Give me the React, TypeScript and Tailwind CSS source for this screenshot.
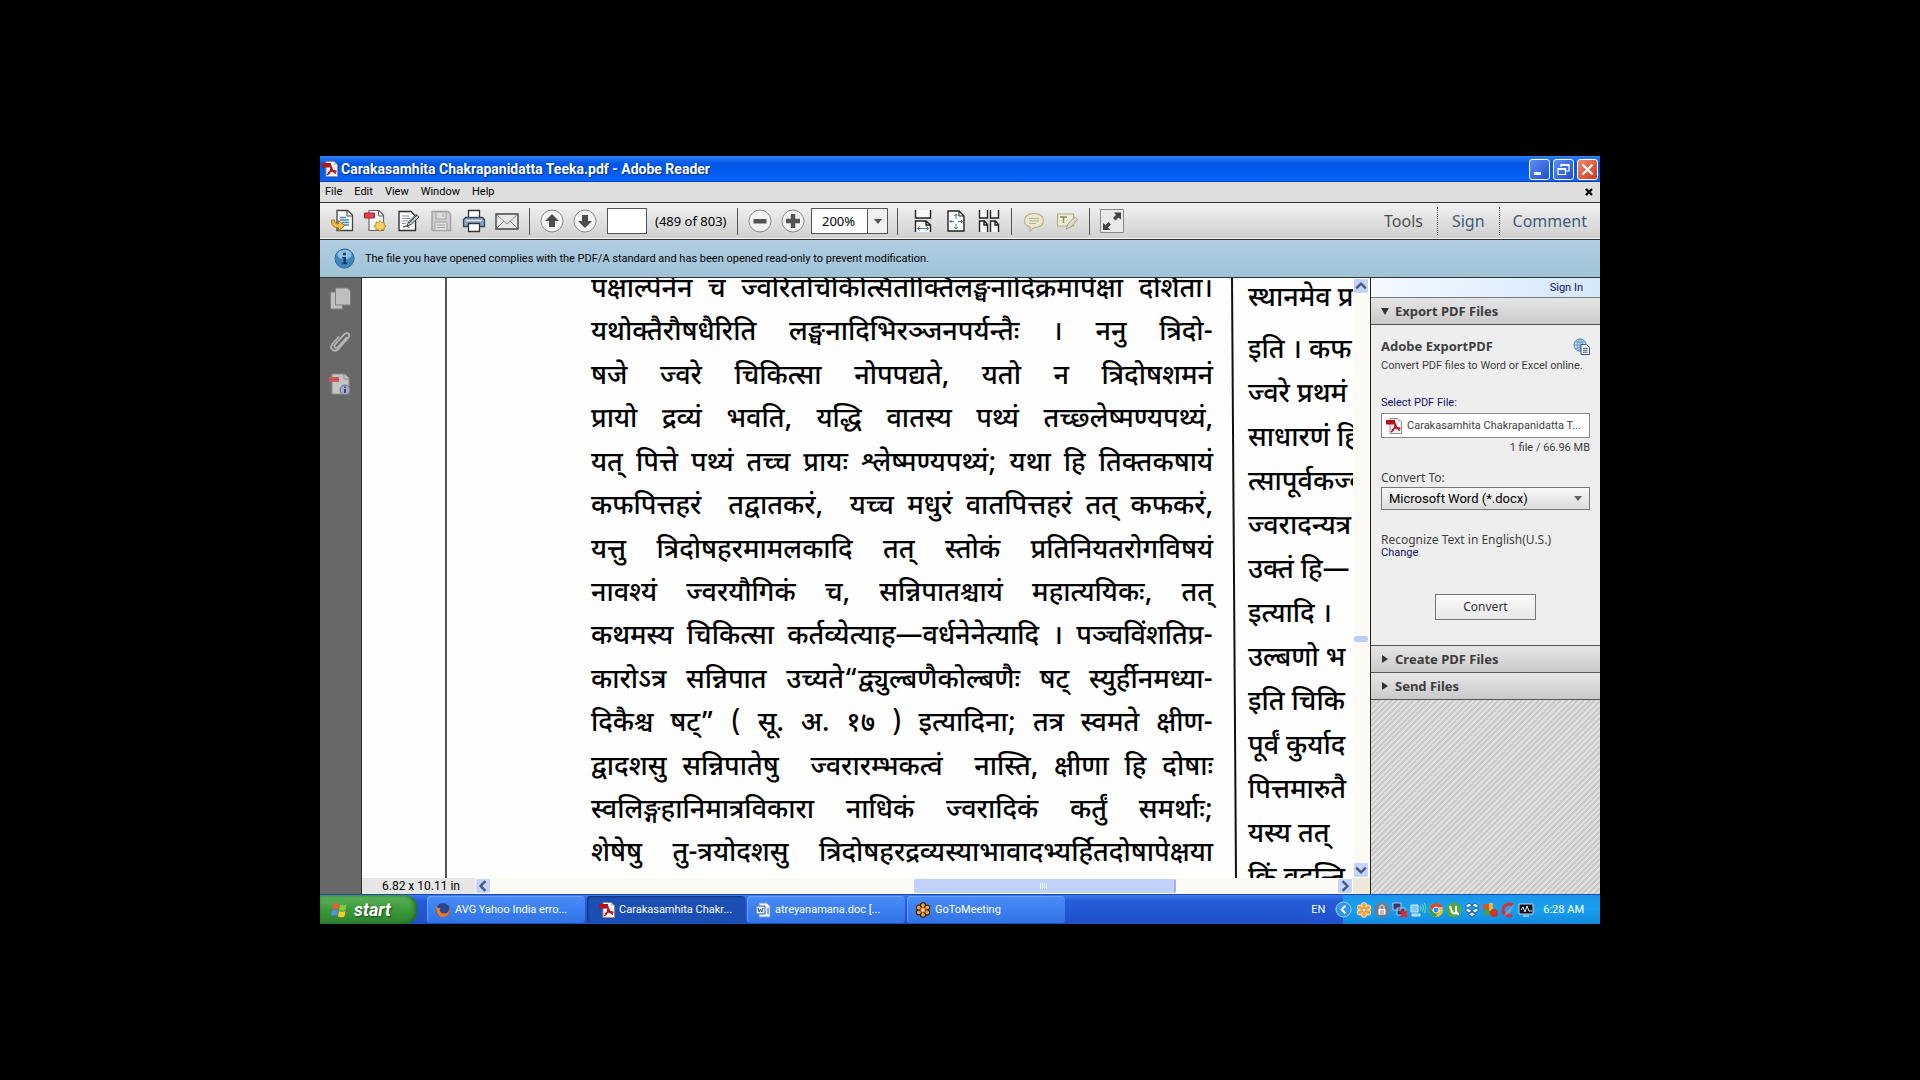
import type { ReactNode } from "react";

type TaskProps = {
  label: string;
  icon: ReactNode;
  active?: boolean;
};

const mainColumn = [
  "पक्षाल्पेनेन च ज्वरितचिकित्सितोक्तिलङ्घनादिक्रमापेक्षा दर्शिता।",
  "यथोक्तैरौषधैरिति लङ्घनादिभिरञ्जनपर्यन्तैः । ननु त्रिदो-",
  "षजे ज्वरे चिकित्सा नोपपद्यते, यतो न त्रिदोषशमनं",
  "प्रायो द्रव्यं भवति, यद्धि वातस्य पथ्यं तच्छ्लेष्मण्यपथ्यं,",
  "यत् पित्ते पथ्यं तच्च प्रायः श्लेष्मण्यपथ्यं; यथा हि तिक्तकषायं",
  "कफपित्तहरं\u00a0 तद्वातकरं,\u00a0 यच्च मधुरं वातपित्तहरं तत् कफकरं,",
  "यत्तु त्रिदोषहरमामलकादि तत् स्तोकं प्रतिनियतरोगविषयं",
  "नावश्यं ज्वरयौगिकं च, सन्निपातश्चायं महात्ययिकः, तत्",
  "कथमस्य चिकित्सा कर्तव्येत्याह—वर्धनेनेत्यादि । पञ्चविंशतिप्र-",
  "कारोऽत्र सन्निपात उच्यते“द्व्युल्बणैकोल्बणैः षट् स्युर्हीनमध्या-",
  "दिकैश्च षट्” ( सू. अ. १७ ) इत्यादिना; तत्र स्वमते क्षीण-",
  "द्वादशसु सन्निपातेषु\u00a0 ज्वरारम्भकत्वं\u00a0 नास्ति, क्षीणा हि दोषाः",
  "स्वलिङ्गहानिमात्रविकारा नाधिकं ज्वरादिकं कर्तुं समर्थाः;",
  "शेषेषु तु-त्रयोदशसु त्रिदोषहरद्रव्यस्याभावादभ्यर्हितदोषापेक्षया",
  "किंचिदेव दोषहरं भेषजं प्रयोज्यं श्रीमता वैद्येन",
];

const sideColumn = [
  "स्थानमेव प्र",
  "इति । कफ",
  "ज्वरे प्रथमं",
  "साधारणं हि",
  "त्सापूर्वकज्व",
  "ज्वरादन्यत्र",
  "उक्तं हि—",
  "इत्यादि ।",
  "उल्बणो भ",
  "इति चिकि",
  "पूर्वं कुर्याद",
  "पित्तमारुतै",
  "यस्य तत्",
  "किं वदन्ति",
];

function ToolIcon({ label, children }: { label: string; children: ReactNode }) {
  return (
    <button type="button" aria-label={label} className="flex h-8 w-[33px] shrink-0 items-center justify-center">
      <svg viewBox="0 0 24 24" className="size-6" fill="none">
        {children}
      </svg>
    </button>
  );
}

function Separator({ wide = false }: { wide?: boolean }) {
  return (
    <span className={wide ? "flex w-[18px] shrink-0 justify-center" : "flex w-3 shrink-0 justify-center"}>
      <span className="h-[27px] w-px bg-[#555]" />
    </span>
  );
}

function PdfGlyph() {
  return (
    <svg viewBox="0 0 16 16" className="size-4 shrink-0">
      <path d="M4 .5h8l3.500 3.500v11.500H4z" fill="#f7f3f3" stroke="#9a8b8b" />
      <path d="M12 .5V4h3.500z" fill="#ccc" />
      <path d="M0 2h9v4.500H0z" fill="#b3141c" />
      <path d="M5 14c3-2 4.500-6 4-9.500M6 12c3-2.500 6-2.500 8.500-1.500M9.500 6c.5 3 2.500 5.500 4.500 6.500" fill="none" stroke="#b3141c" strokeWidth="1.500" />
    </svg>
  );
}

function FlowerGlyph({ outline = false }: { outline?: boolean }) {
  const stroke = outline ? "#241505" : "#f6e2c0";
  return (
    <svg viewBox="0 0 18 18" className="size-4 shrink-0">
      {[0, 60, 120, 180, 240, 300].map((angle) => (
        <circle key={angle} cx="9" cy="3.600" r="2.800" fill="#f7a12b" stroke={stroke} strokeWidth="1.200" transform={`rotate(${angle} 9 9)`} />
      ))}
      <circle cx="9" cy="9" r="2.400" fill="#fff" stroke="#e07b10" strokeWidth="1.300" />
    </svg>
  );
}

function TaskButton({ label, icon, active = false }: TaskProps) {
  return (
    <button
      type="button"
      className={
        active
          ? "flex h-[27px] min-w-0 max-w-[158px] flex-1 items-center gap-1 rounded-sm bg-[#1c4fb4] px-3 text-white shadow-[inset_1px_1px_2px_#0d2f7c]"
          : "flex h-[27px] min-w-0 max-w-[158px] flex-1 items-center gap-1 rounded-sm bg-linear-to-b from-[#4a8bf5] via-[#3c7ff0] to-[#3373e4] px-2 text-white shadow-[inset_1px_1px_1px_#6ba4fb]"
      }
    >
      {icon}
      <span className="truncate">{label}</span>
    </button>
  );
}

function ScrollButton({ label, d }: { label: string; d: string }) {
  return (
    <button
      type="button"
      aria-label={label}
      className="flex size-4 shrink-0 items-center justify-center rounded-xs border border-white bg-[#c3d3fb]"
    >
      <svg viewBox="0 0 10 10" className="size-3" fill="none" stroke="#45597f" strokeWidth="2">
        <path d={d} />
      </svg>
    </button>
  );
}

function TitleBar() {
  return (
    <header className="flex h-[26px] items-center gap-[3px] bg-linear-to-b from-[#2b80f5] via-[#0055e5] via-30% to-[#0566fb] pr-[2px] pl-[2px] shadow-[inset_0_-1px_0_#0a3fb5]">
      <PdfGlyph />
      <h1 className="truncate text-[14px] leading-5 font-bold text-white [text-shadow:1px_1px_1px_#0a2a80]">
        Carakasamhita Chakrapanidatta Teeka.pdf - Adobe Reader
      </h1>
      <div className="ml-auto flex gap-[3px]">
        <button type="button" aria-label="Minimize" className="size-[21px] rounded-[3px] border border-white bg-linear-to-br from-[#5d8df0] to-[#1d4fd6]">
          <svg viewBox="0 0 19 19">
            <path d="M4 12h7v3H4z" fill="#fff" />
          </svg>
        </button>
        <button type="button" aria-label="Restore" className="size-[21px] rounded-[3px] border border-white bg-linear-to-br from-[#5d8df0] to-[#1d4fd6]">
          <svg viewBox="0 0 19 19" fill="none" stroke="#fff" strokeWidth="1.200">
            <path d="M7 7V4.500h8v6.500h-3M7 5.500h8" />
            <path d="M4 8.500h7.500v6H4zM4 9.500h7.500" />
          </svg>
        </button>
        <button type="button" aria-label="Close" className="size-[21px] rounded-[3px] border border-white bg-linear-to-br from-[#ee8a6a] to-[#cc3311]">
          <svg viewBox="0 0 19 19" stroke="#fff" strokeWidth="2.200">
            <path d="M4.500 4.500l10 10M14.500 4.500l-10 10" />
          </svg>
        </button>
      </div>
    </header>
  );
}

function MenuBar() {
  return (
    <nav className="flex h-5 items-center gap-3 bg-[#dedede] pr-[7px] pl-[5px] text-black">
      {["File", "Edit", "View", "Window", "Help"].map((name) => (
        <button key={name} type="button">
          {name}
        </button>
      ))}
      <button type="button" aria-label="Close document" className="ml-auto">
        <svg viewBox="0 0 8 8" className="size-2" stroke="#000" strokeWidth="2.400">
          <path d="M1 1l6 6M7 1L1 7" />
        </svg>
      </button>
    </nav>
  );
}

function Toolbar() {
  return (
    <div className="flex h-[38px] items-center border-y border-[#333] bg-linear-to-b from-[#f2f2f2] to-[#cfcfcf] pl-[5px] font-['Noto_Sans',sans-serif] shadow-[inset_0_-1px_0_#f5f5f5]">
      <ToolIcon label="Open">
        <path d="M7 1.500h10.500L22.500 6v15.500H7z" fill="#fafafa" stroke="#444" strokeWidth="1.300" />
        <path d="M17 2v5h5" stroke="#444" />
        <path d="M10 8.500h6M10 11h9M12 13.500h7M13 16h6" stroke="#4a84b8" strokeWidth="1.300" />
        <path d="M1.500 11c-.5 5 2.500 8 7 7.500v3.500l6-5.500-6-5v3.500c-2.500.3-4-1-4-4z" fill="#f5bf4a" stroke="#a67216" />
      </ToolIcon>
      <ToolIcon label="Create PDF">
        <path d="M6 1.500h10L20.500 6v15.500H6z" fill="#fafafa" stroke="#666" strokeWidth="1.200" />
        <path d="M15.500 2v5h5" stroke="#666" />
        <path d="M1.500 4h10v5h-10z" fill="#e0434d" stroke="#a8222c" />
        <path d="M17 11.500l1.500 2 2.500-.5v2.500l2 1.500-2 1.500v2.500l-2.500-.5-1.500 2-1.500-2-2.500.5v-2.500l-2-1.500 2-1.500V13l2.500.5z" fill="#f8cf63" stroke="#bd8b25" />
      </ToolIcon>
      <ToolIcon label="Sign document">
        <path d="M3 2.500h12L19.500 7v14.500H3z" fill="#fafafa" stroke="#333" strokeWidth="1.400" />
        <path d="M6 7h7M6 9.500h8M6 12h6M6 14.500h4" stroke="#999" />
        <path d="M7 18l3-1 3.500 1.500" stroke="#333" />
        <path d="M11 17l1.500-4L20 5.500l3 2.500-8 7.500z" fill="#bfc6cf" stroke="#444" />
        <path d="M13 14l8-8" stroke="#444" />
      </ToolIcon>
      <ToolIcon label="Save">
        <path d="M3 2.500h16l2.500 2.500v16.500H3z" fill="#d0d0d0" stroke="#a2a2a2" strokeWidth="1.500" />
        <path d="M7 3h10v7H7zM6 21v-8h12v8" fill="#dedede" stroke="#a2a2a2" />
        <path d="M14 4.500v3.500M8 16h8M8 18.500h8" stroke="#a2a2a2" />
      </ToolIcon>
      <ToolIcon label="Print">
        <path d="M6.500 1.500h11v8h-11z" fill="#fff" stroke="#333" strokeWidth="1.300" />
        <path d="M3.500 8.500h17l2 2v7h-21v-7z" fill="#8aa2bc" stroke="#39475a" strokeWidth="1.300" />
        <path d="M4 11.500h16" stroke="#d6e4f1" strokeWidth="1.500" />
        <path d="M6.500 14.500h11v8h-11z" fill="#fff" stroke="#333" strokeWidth="1.300" />
      </ToolIcon>
      <ToolIcon label="E-mail">
        <path d="M1 5h22v15H1z" fill="#e9e9e9" stroke="#444" strokeWidth="1.400" />
        <path d="M2 6l10 9L22 6M2 19l7-7M22 19l-7-7" stroke="#888" />
      </ToolIcon>
      <Separator />
      <ToolIcon label="Previous page">
        <circle cx="12" cy="12" r="11" fill="#f2f2f2" stroke="#888" />
        <path d="M12 5l7 7h-4v6H9v-6H5z" fill="#4d4d4d" />
      </ToolIcon>
      <ToolIcon label="Next page">
        <circle cx="12" cy="12" r="11" fill="#f2f2f2" stroke="#888" />
        <path d="M12 19l7-7h-4V6H9v6H5z" fill="#4d4d4d" />
      </ToolIcon>
      <input aria-label="Page number" className="mx-[6px] h-[26px] w-10 shrink-0 border border-[#555] bg-white px-1" />
      <span className="ml-[2px] w-[76px] shrink-0 text-[13px] whitespace-nowrap">(489 of 803)</span>
      <Separator />
      <ToolIcon label="Zoom out">
        <circle cx="12" cy="12" r="11" fill="#f2f2f2" stroke="#888" />
        <path d="M5.500 10h13v4.500h-13z" fill="#555" />
      </ToolIcon>
      <ToolIcon label="Zoom in">
        <circle cx="12" cy="12" r="11" fill="#f2f2f2" stroke="#888" />
        <path d="M9.800 5h4.500v4.800H19v4.500h-4.700V19H9.800v-4.700H5V9.800h4.800z" fill="#555" />
      </ToolIcon>
      <div className="ml-[2px] flex h-[26px] w-[77px] shrink-0 border border-[#555] bg-white">
        <input aria-label="Zoom level" defaultValue="200%" className="w-[55px] pl-[10px] text-[13px]" />
        <button type="button" aria-label="Zoom presets" className="flex flex-1 items-center justify-center border-l border-[#555] bg-[#f0f0f0]">
          <svg viewBox="0 0 8 5" className="w-2">
            <path d="M0 0h8L4 5z" fill="#555" />
          </svg>
        </button>
      </div>
      <Separator wide />
      <ToolIcon label="Fit width">
        <path d="M4.500 1v8h15V1" stroke="#222" strokeWidth="1.400" fill="#fafafa" />
        <path d="M4.500 23V12h10.500l4.500 4v7M15 12v4h4.500" stroke="#222" strokeWidth="1.400" fill="#fafafa" />
        <path d="M6 19.500h12M8.500 17.500l-2 2 2 2M15.500 17.500l2 2-2 2" stroke="#5c74a5" />
      </ToolIcon>
      <ToolIcon label="Fit page">
        <path d="M4 2h11l5 5v15H4z" stroke="#222" strokeWidth="1.400" fill="#fafafa" />
        <path d="M15 2v5h5" stroke="#222" />
        <path d="M12 5v5M12 15v5M5.500 12.500H10M14 12.500h4.500M10.500 7L12 5l1.500 2M10.500 18l1.500 2 1.500-2M7.500 11L6 12.500 7.500 14M17 11l1.500 1.500L17 14" stroke="#5c74a5" />
      </ToolIcon>
      <ToolIcon label="Two page view">
        <path d="M2.500 1v8h8V1M13.500 1v8h8V1" stroke="#222" strokeWidth="1.400" fill="#fafafa" />
        <path d="M2.500 23V12h5l3 3.500V23M13.500 23V12h5l3 3.500V23M7 12v4h3M18 12v4h3" stroke="#222" strokeWidth="1.400" fill="#fafafa" />
      </ToolIcon>
      <Separator />
      <ToolIcon label="Sticky note">
        <path d="M12 4.500c6 0 9.500 3 9.500 7s-3.500 7-9.500 7l-4 3.500v-4c-3.500-1-5.500-3.500-5.500-6.500 0-4 3.500-7 9.500-7z" fill="#ebe8cf" stroke="#b5b08c" strokeWidth="1.200" />
        <path d="M7 9.500h10M7 12h10M7 14.500h7" stroke="#b5b08c" />
      </ToolIcon>
      <ToolIcon label="Highlight text">
        <path d="M2.500 5h16v12h-16z" fill="#f0edd5" stroke="#b5b08c" strokeWidth="1.200" />
        <path d="M5 8h7M8.500 8v6" stroke="#8f8b6c" strokeWidth="1.500" />
        <path d="M11 20l2-5 6.500-7 3 2.500-6.500 7.500z" fill="#dddac8" stroke="#a5a28c" />
      </ToolIcon>
      <Separator />
      <ToolIcon label="Read mode">
        <path d="M.5.5h23v23H.5z" fill="#e9e9e9" stroke="#888" />
        <path d="M14 3.500h7v7l-2.500-2-3 3-2.500-2.500 3-3z" fill="#444" />
        <path d="M3 14l2.500 2 3-3 2.500 2.500-3 3 2.500 2.500H3z" fill="#444" />
      </ToolIcon>
      <div className="ml-auto flex items-center text-[16px] leading-7 text-[#44597a]">
        <button type="button" className="px-[14px] text-[#505050]">
          Tools
        </button>
        <button type="button" className="border-l border-dotted border-[#555] px-[14px]">
          Sign
        </button>
        <button type="button" className="border-l border-dotted border-[#555] px-[13px]">
          Comment
        </button>
      </div>
    </div>
  );
}

function InfoBar() {
  return (
    <div className="flex h-[37px] items-center gap-[10px] bg-linear-to-b from-[#b2cde3] to-[#9fc3d6] pl-[14px] text-black">
      <svg viewBox="0 0 22 22" className="size-[21px]">
        <circle cx="11" cy="11" r="10" fill="#3f88bf" stroke="#2c6796" />
        <ellipse cx="11" cy="7" rx="7.500" ry="5" fill="#8fc1e2" />
        <path d="M9.500 5h3v2.500h-3zM8.500 9.500h4v6H14v1.500H8.500v-1.500H10V11H8.500z" fill="#123c66" />
      </svg>
      <p className="truncate">The file you have opened complies with the PDF/A standard and has been opened read-only to prevent modification.</p>
    </div>
  );
}

function NavRail() {
  return (
    <aside className="flex w-[42px] shrink-0 flex-col items-center gap-[19px] border-r border-[#2e2e2e] bg-[#686868] pt-2 pr-[2px]">
      <button type="button" aria-label="Page thumbnails">
        <svg viewBox="0 0 24 24" className="size-6" fill="#bfbfbf" stroke="#7e7e7e">
          <path d="M2.500 6h12v17h-12z" />
          <path d="M7.500 2h12l3 3v14h-15z" />
        </svg>
      </button>
      <button type="button" aria-label="Attachments">
        <svg viewBox="0 0 24 24" className="size-6" fill="none" stroke="#b5b5b5" strokeWidth="1.800">
          <path d="M19 8l-9 10c-2 2-5 0-3-2.500l9-10c3-3 7-.5 4.500 3L10.500 20c-4 4-9.500 0-6.500-4.500l7-8" />
        </svg>
      </button>
      <button type="button" aria-label="Standards">
        <svg viewBox="0 0 24 24" className="size-6" fill="none">
          <path d="M4 2h13l4 4v16H4z" fill="#c4c4c4" stroke="#8a8a8a" />
          <path d="M16 2v5h5" stroke="#8a8a8a" />
          <path d="M1 5h10v5H1z" fill="#c9575c" />
          <circle cx="17" cy="18" r="5" fill="#a9acc6" stroke="#6c6f8d" />
          <path d="M17 14.500v1.500M17 17v4" stroke="#333a66" strokeWidth="1.800" />
        </svg>
      </button>
    </aside>
  );
}

function DocumentView() {
  return (
    <main className="flex min-w-0 flex-1 flex-col bg-[#fbfaf4]">
      <div className="flex h-[600px]">
        <div className="flex min-w-0 flex-1 overflow-hidden bg-[#fefefe] font-['Noto_Sans_Devanagari','Noto_Sans',sans-serif] text-[27px] leading-[43px] font-medium whitespace-nowrap text-black">
          <div className="w-[85px] shrink-0 border-r-2 border-[#555]" />
          <div className="-mt-[9px] ml-[144px] flex h-[651px] w-[622px] shrink-0 flex-col justify-between">
            {mainColumn.map((line) => (
              <p key={line} className="[text-align-last:justify]">
                {line}
              </p>
            ))}
          </div>
          <svg viewBox="0 0 8 600" preserveAspectRatio="none" className="ml-[17px] h-full w-2 shrink-0">
            <path d="M2 0L6 600" stroke="#111" strokeWidth="2" />
          </svg>
          <div className="-mt-[11px] ml-[10px] leading-11">
            {sideColumn.map((line) => (
              <p key={line} className="first:mt-[11px] first:mb-2">
                {line}
              </p>
            ))}
          </div>
        </div>
        <div className="flex w-[17px] shrink-0 flex-col items-center bg-[#fbfaf4]">
          <ScrollButton label="Scroll up" d="M1 7l4-4 4 4" />
          <div className="grow-14" />
          <div className="h-[6px] w-[14px] rounded-xs bg-[#bccdf8]" />
          <div className="grow-9" />
          <ScrollButton label="Scroll down" d="M1 3l4 4 4-4" />
        </div>
      </div>
      <div className="flex h-4 items-center">
        <div className="flex h-full w-[113px] shrink-0 items-center bg-[#e6e6e6] pl-5 text-[12px] text-black">6.82 x 10.11 in</div>
        <ScrollButton label="Scroll left" d="M7 1L3 5l4 4" />
        <div className="grow-42" />
        <div className="flex h-[14px] w-[262px] items-center justify-center gap-px rounded-xs border-r-2 border-[#9db4ea] bg-[#c0d1fa]">
          {[0, 1, 2, 3].map((n) => (
            <span key={n} className="h-[6px] w-px bg-[#eef3ff]" />
          ))}
        </div>
        <div className="grow-16" />
        <ScrollButton label="Scroll right" d="M3 1l4 4-4 4" />
        <div className="h-full w-[17px] bg-[#ece9d8]" />
      </div>
    </main>
  );
}

function SectionHeader({ title, open = false }: { title: string; open?: boolean }) {
  return (
    <button
      type="button"
      aria-expanded={open}
      className="flex h-[27px] w-full items-center gap-[6px] border-b border-[#555] bg-linear-to-b from-[#e6e6e6] to-[#cacaca] pl-[10px] font-['Noto_Sans',sans-serif] text-[13px] font-bold text-[#3c3c3c]"
    >
      <svg viewBox="0 0 8 8" className="size-2" fill="#333">
        <path d={open ? "M0 1h8L4 8z" : "M1 0l6 4-6 4z"} />
      </svg>
      {title}
    </button>
  );
}

function ToolsPanel() {
  return (
    <aside className="flex w-[230px] shrink-0 flex-col border-l border-[#222] bg-[repeating-linear-gradient(135deg,#c9c9c9_0px,#c9c9c9_2px,#e0e0e0_2px,#e0e0e0_4px)] text-[#404040]">
      <div className="flex h-5 items-center justify-end border-b border-[#777] bg-linear-to-r from-[#f4faff] to-[#d3e8fb] pr-[17px]">
        <a href="#signin" className="text-[#10106a]">
          Sign In
        </a>
      </div>
      <SectionHeader title="Export PDF Files" open />
      <div className="flex flex-col border-b border-[#555] bg-[#eee] pt-[11px] pr-[10px] pb-[25px] pl-[10px]">
        <div className="flex h-5 items-center justify-between">
          <h2 className="font-['Noto_Sans',sans-serif] text-[13px] font-bold">Adobe ExportPDF</h2>
          <svg viewBox="0 0 18 18" className="size-[17px]" fill="none">
            <circle cx="7.500" cy="7.500" r="6.500" fill="#b5d6ef" stroke="#4a7fb5" />
            <path d="M1 7.500h13M7.500 1v13M3 3.500c3 2 6 2 9 0M3 11.500c3-2 6-2 9 0M7.500 1c-4 4-4 9 0 13M7.500 1c4 4 4 9 0 13" stroke="#6f9dc9" />
            <path d="M8.500 7h6l3 3v7.500h-9z" fill="#fff" stroke="#2d4a6f" />
            <path d="M10.500 11h5M10.500 13h5M10.500 15h5" stroke="#2d4a6f" />
          </svg>
        </div>
        <p className="h-5 leading-5 whitespace-nowrap">Convert PDF files to Word or Excel online.</p>
        <div className="mt-[17px] h-5 leading-5 text-[#10106a]">Select PDF File:</div>
        <button type="button" className="flex h-[25px] items-center gap-[5px] border border-[#888] bg-white px-1">
          <PdfGlyph />
          <span className="whitespace-nowrap">Carakasamhita Chakrapanidatta T...</span>
        </button>
        <p className="h-5 text-right leading-5">1 file / 66.96 MB</p>
        <label htmlFor="format" className="mt-[11px] h-[18px] font-['Noto_Sans',sans-serif] text-[12px] leading-[18px]">
          Convert To:
        </label>
        <div className="grid items-center">
          <select
            id="format"
            className="col-start-1 row-start-1 h-[23px] appearance-none border border-[#777] bg-linear-to-b from-[#f8f8f8] to-[#dcdcdc] pl-[7px] text-[13px] text-black"
          >
            <option>Microsoft Word (*.docx)</option>
          </select>
          <svg viewBox="0 0 8 5" className="pointer-events-none col-start-1 row-start-1 mr-2 w-2 justify-self-end">
            <path d="M0 0h8L4 5z" fill="#666" />
          </svg>
        </div>
        <p className="mt-[23px] h-[13px] font-['Noto_Sans',sans-serif] text-[12px] leading-[13px] whitespace-nowrap">Recognize Text in English(U.S.)</p>
        <a href="#change" className="h-[13px] leading-[13px] text-[#10106a]">
          Change
        </a>
        <button type="button" className="mt-[35px] h-[26px] w-[101px] self-center border border-[#777] bg-linear-to-b from-[#fafafa] to-[#e8e8e8] font-['Noto_Sans',sans-serif] text-[12px] text-[#333]">
          Convert
        </button>
      </div>
      <SectionHeader title="Create PDF Files" />
      <SectionHeader title="Send Files" />
    </aside>
  );
}

function Tray() {
  return (
    <div className="flex h-full items-center gap-[2px] bg-linear-to-b from-[#1c95e8] via-[#18a0f0] to-[#1187dc] pr-[16px] text-white">
      <button type="button" aria-label="Show hidden icons" className="-ml-2 mr-[2px]">
        <svg viewBox="0 0 18 18" className="size-[17px]" fill="none">
          <circle cx="9" cy="9" r="8" fill="#3494ea" stroke="#9fd0f7" />
          <path d="M11 5L7 9l4 4" stroke="#fff" strokeWidth="2" />
        </svg>
      </button>
      <FlowerGlyph />
      <svg viewBox="0 0 16 16" className="size-4" fill="none">
        <circle cx="8" cy="8" r="7.500" fill="#747b84" />
        <path d="M4.500 7h7v5.500h-7z" fill="#fff" />
        <path d="M6 7V5c0-2.500 4-2.500 4 0v2" stroke="#fff" />
        <path d="M6 9h4M6 11h4" stroke="#747b84" />
      </svg>
      <svg viewBox="0 0 16 16" className="size-4" fill="none">
        <path d="M1 1h8v7H1zM5 6h8v7H5z" fill="#32386e" stroke="#b9c2e6" />
        <path d="M9 9l6 6M15 9l-6 6" stroke="#e02b2b" strokeWidth="2.500" />
      </svg>
      <svg viewBox="0 0 16 16" className="size-4" fill="none">
        <path d="M1 3h7v7H1zM2 12h8v2H2z" fill="#84c4f2" stroke="#d7ecfb" />
        <path d="M10 4c1.500 1.500 1.500 3 0 4.500M12 2.500c2 2 2 5 0 7M14 1c2.500 3 2.500 7 0 10" stroke="#7fe38b" />
      </svg>
      <svg viewBox="0 0 16 16" className="size-4">
        <circle cx="8" cy="8" r="7" fill="#f1c232" />
        <path d="M2 4.500A7 7 0 0 1 14.500 5H8a3.500 3.500 0 0 0-3.200 4z" fill="#dd4437" />
        <path d="M2 4.500A7 7 0 0 0 7.500 15L10 10.500 5 10z" fill="#2fa153" />
        <circle cx="8" cy="8" r="3" fill="#4385f0" stroke="#fff" />
      </svg>
      <svg viewBox="0 0 16 16" className="size-4">
        <circle cx="8" cy="8" r="7.500" fill="#54a83b" />
        <path d="M4 4l2 6c1 2 4 2 4 0V4M10 8c0 3 1 4 3 4" stroke="#fff" strokeWidth="2" fill="none" />
      </svg>
      <svg viewBox="0 0 16 16" className="size-4" fill="#e8f3fd" stroke="#225f9c">
        <path d="M5 1l3 2-4 3-3-2zM11 1l4 3-3 2-4-3zM1 8l3-2 4 3-3 2zM15 8l-3-2-4 3 3 2zM4 12l4-2 4 2-4 3z" />
      </svg>
      <svg viewBox="0 0 16 16" className="size-4">
        <path d="M1 2h7v6H1z" fill="#d9532b" />
        <path d="M2 7h9v6H2z" fill="#4f9c3c" />
        <path d="M7 1h4v8H7z" fill="#e3b53a" />
        <circle cx="12" cy="11" r="4" fill="#cf3326" />
      </svg>
      <svg viewBox="0 0 16 16" className="size-4" fill="none">
        <path d="M13 3C8 0 3 4 3 8s4 7 9 5" stroke="#d8342c" strokeWidth="3" />
        <path d="M14 2L7 9l-3 5 6-3z" fill="#8a98b5" />
      </svg>
      <svg viewBox="0 0 16 16" className="size-4" fill="none">
        <path d="M1 2h14v10H1z" fill="#10131a" stroke="#c9d3dc" />
        <path d="M3 8l2-3 2 5 2-6 2 5h3M5 14h6" stroke="#e6edf4" />
      </svg>
      <time className="ml-[7px] whitespace-nowrap">6:28 AM</time>
    </div>
  );
}

function Taskbar() {
  return (
    <footer className="flex h-[30px] items-center border-t border-[#1b4ab5] bg-linear-to-b from-[#3a79ea] via-[#255cdb] via-20% to-[#1e50c8]">
      <button
        type="button"
        className="mr-[10px] flex h-full w-[97px] shrink-0 items-center gap-1 rounded-r-xl bg-linear-to-b from-[#5fb35d] via-[#3c9a3c] to-[#2c832d] pl-[10px] text-[18px] font-bold text-white italic shadow-[inset_-2px_0_4px_#1f641f] [text-shadow:1px_1px_2px_#174a17]"
      >
        <svg viewBox="0 0 20 20" className="size-5">
          <path d="M3 4c2-1.500 4-1.500 6 0L8 9.500c-2-1-4-1-6 0z" fill="#ef5b2c" />
          <path d="M10 4.500c2 1 4 1 6.500 0l-1 5.500c-2 1-4 1-6.500 0z" fill="#8cc63f" />
          <path d="M2 10.500c2-1 4-1 6 0L7 16c-2-1-4-1-6 0z" fill="#4f8fea" />
          <path d="M9 11c2 1 4 1 6.500 0l-1 5.500c-2 1-4 1-6.500 0z" fill="#fbca2c" />
        </svg>
        start
      </button>
      <div className="flex min-w-0 flex-1 gap-[2px]">
        <TaskButton
          label="AVG Yahoo India erro..."
          icon={
            <svg viewBox="0 0 16 16" className="size-4 shrink-0">
              <circle cx="8" cy="8" r="7" fill="#274a8f" />
              <path d="M1 4c0 8 3 11 7 11 5 0 8-4 6.500-10 0 5-3 7-6 6.500C5 11 4 8 5.500 6 3 6.500 2 5 1 4z" fill="#ee7a23" />
            </svg>
          }
        />
        <TaskButton label="Carakasamhita Chakr..." icon={<PdfGlyph />} active />
        <TaskButton
          label="atreyanamana.doc [..."
          icon={
            <svg viewBox="0 0 16 16" className="size-4 shrink-0" fill="none">
              <path d="M4 1h8l3 3v11H4z" fill="#eef4fb" stroke="#7f9cc7" />
              <path d="M1 4h9v8H1z" fill="#dce9f8" stroke="#3566ad" />
              <path d="M3 6l1.200 4L5.500 7l1.300 3L8 6M12 7h2M12 9h2M12 11h2" stroke="#2c5aa0" />
            </svg>
          }
        />
        <TaskButton label="GoToMeeting" icon={<FlowerGlyph outline />} />
      </div>
      <span className="mr-[18px] text-white">EN</span>
      <Tray />
    </footer>
  );
}

export default function App() {
  return (
    <div className="flex min-h-screen items-center justify-center bg-black">
      <div className="w-2/3 overflow-hidden bg-[#dedede] font-[Roboto,sans-serif] text-[11px] leading-4">
        <TitleBar />
        <MenuBar />
        <Toolbar />
        <InfoBar />
        <div className="flex border-t border-[#333]">
          <NavRail />
          <DocumentView />
          <ToolsPanel />
        </div>
        <Taskbar />
      </div>
    </div>
  );
}
